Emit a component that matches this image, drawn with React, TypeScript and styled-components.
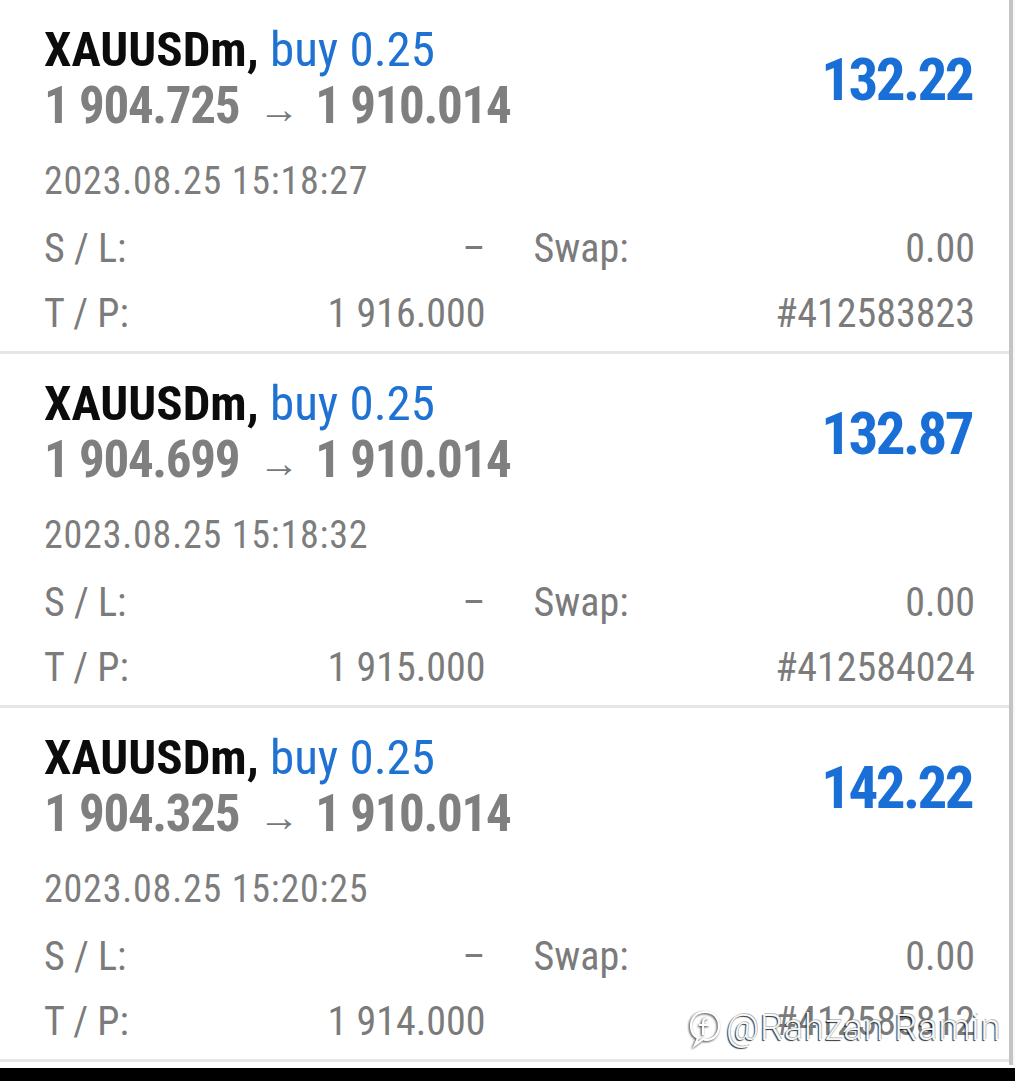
import React from "react";
import styled, { createGlobalStyle } from "styled-components";

const Global = createGlobalStyle`
  html, body { margin: 0; padding: 0; background: #000; }
  body { font-family: Roboto, "Liberation Sans", sans-serif; }
  #root { width: 1015px; height: 1081px; }
`;

const Frame = styled.div`
  width: 1015px;
  height: 1081px;
  display: flex;
  flex-direction: column;
  background: #000;
  overflow: hidden;
`;

const Screen = styled.div`
  position: relative;
  display: flex;
  height: 1068px;
  background: #fff;
`;

const List = styled.div`
  flex: 1;
  display: flex;
  flex-direction: column;
  border-top: 1px solid #ececec;
  margin-top: -1px;
`;

const ScrollRail = styled.div`
  width: 4px;
  height: 1065px;
  background: #c4c4c4;
`;

const Gutter = styled.div`
  width: 2px;
  background: #f7f7f7;
`;

const Card = styled.div`
  height: 354px;
  box-sizing: border-box;
  padding: 22px 34px 8px 44px;
  border-bottom: 3px solid #e6e6e6;
  display: flex;
  flex-direction: column;
  font-stretch: 87.5%;
`;

const Head = styled.div`
  display: flex;
  justify-content: space-between;
  align-items: center;
`;

const HeadText = styled.div`
  display: flex;
  flex-direction: column;
`;

const Title = styled.div`
  font-size: 49px;
  line-height: 56px;
  font-weight: 700;
  color: #0c0c0c;
  white-space: nowrap;
`;

const Side = styled.span`
  font-weight: 400;
  color: #1f72d2;
`;

const Prices = styled.div`
  font-size: 51px;
  line-height: 56px;
  font-weight: 700;
  letter-spacing: -1.3px;
  color: #7f7f7f;
  white-space: nowrap;
`;

const Arrow = styled.span`
  display: inline-block;
  margin: 0 5px 0 9px;
  font-weight: 500;
  font-size: 41px;
  letter-spacing: 0;
  color: #777;
`;

const Profit = styled.div`
  margin-right: 3px;
  font-size: 59px;
  line-height: 60px;
  font-weight: 700;
  letter-spacing: -2.6px;
  color: #1a6fd7;
`;

const Time = styled.div`
  margin-top: 19px;
  font-size: 38px;
  line-height: 50px;
  letter-spacing: 0.8px;
  color: #7d7d7d;
`;

const Details = styled.div`
  margin-top: 10px;
  display: grid;
  grid-template-columns: 1fr 1fr;
  column-gap: 48px;
`;

const Pair = styled.div`
  display: flex;
  justify-content: space-between;
  font-size: 40px;
  line-height: 65px;
  color: #7b7b7b;
  white-space: nowrap;
`;

const Black = styled.div`
  height: 13px;
  background: #000;
`;

const Watermark = styled.div`
  position: absolute;
  left: 688px;
  top: 1007px;
  display: flex;
  align-items: center;
  gap: 4px;
  color: rgba(255, 255, 255, 0.96);
  font-family: Roboto, sans-serif;
  font-weight: 300;
  font-size: 36px;
  letter-spacing: 1px;
  text-shadow: -1px 1px 1px rgba(0, 0, 0, 0.8), 1px -1px 0 rgba(0, 0, 0, 0.25);
  white-space: nowrap;
`;

const Mark = styled.svg`
  width: 34px;
  height: 40px;
  filter: drop-shadow(-1px 1px 1px rgba(0, 0, 0, 0.8));
`;

type Trade = {
  open: string;
  close: string;
  profit: string;
  time: string;
  tp: string;
  id: string;
};

const trades: Trade[] = [
  { open: "1 904.725", close: "1 910.014", profit: "132.22", time: "2023.08.25 15:18:27", tp: "1 916.000", id: "#412583823" },
  { open: "1 904.699", close: "1 910.014", profit: "132.87", time: "2023.08.25 15:18:32", tp: "1 915.000", id: "#412584024" },
  { open: "1 904.325", close: "1 910.014", profit: "142.22", time: "2023.08.25 15:20:25", tp: "1 914.000", id: "#412585812" },
];

function TradeCard({ t }: { t: Trade }) {
  return (
    <Card>
      <Head>
        <HeadText>
          <Title>
            XAUUSDm, <Side>buy 0.25</Side>
          </Title>
          <Prices>
            {t.open} <Arrow>→</Arrow> {t.close}
          </Prices>
        </HeadText>
        <Profit>{t.profit}</Profit>
      </Head>
      <Time>{t.time}</Time>
      <Details>
        <Pair>
          <span>S / L:</span>
          <span>–</span>
        </Pair>
        <Pair>
          <span>Swap:</span>
          <span>0.00</span>
        </Pair>
        <Pair>
          <span>T / P:</span>
          <span>{t.tp}</span>
        </Pair>
        <Pair>
          <span />
          <span>{t.id}</span>
        </Pair>
      </Details>
    </Card>
  );
}

export default function App() {
  return (
    <Frame>
      <Global />
      <Screen>
        <List>
          {trades.map((t) => (
            <TradeCard key={t.id} t={t} />
          ))}
        </List>
        <ScrollRail />
        <Gutter />
        <Watermark>
          <Mark viewBox="0 0 34 40" fill="none" stroke="#fff" strokeWidth="2.2">
            <path d="M17 4 C8 4 3 10 3 18 C3 24 6 28 10 30 L7 37 L15 31 C16 31 17 32 18 32 C26 32 31 26 31 18 C31 10 26 4 17 4 Z" />
            <path d="M20 10 C16 10 15 12 15 15 L15 27 M11 17 L21 17" />
          </Mark>
          <span>@Rahzan Ramin</span>
        </Watermark>
      </Screen>
      <Black />
    </Frame>
  );
}
